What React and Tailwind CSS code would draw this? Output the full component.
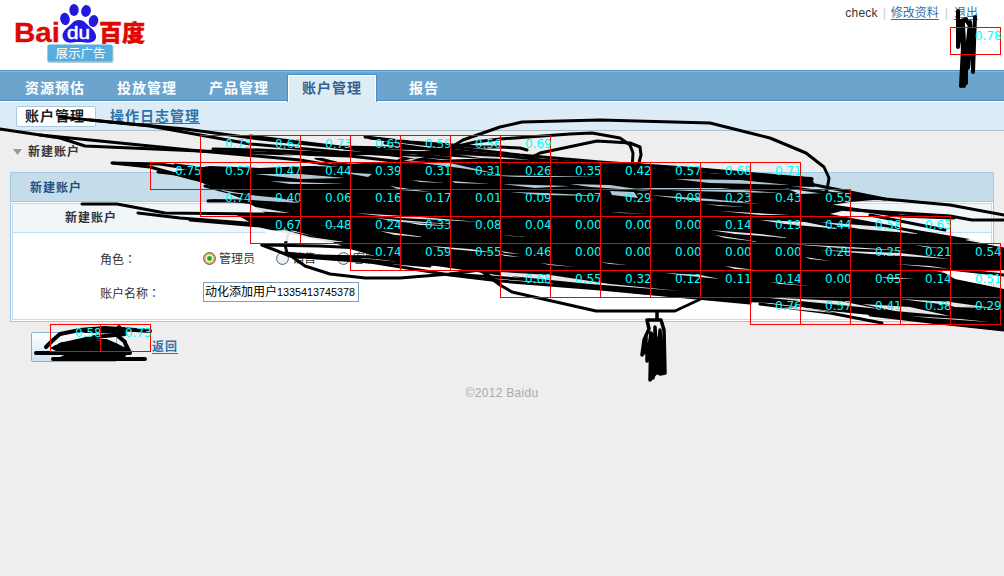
import React from "react";

const rows = [
  { x: 950, y: 27, v: "0.78" },
  { x: 200, y: 135, v: "0.73 0.62 0.73 0.65 0.59 0.56 0.69" },
  { x: 150, y: 162, v: "0.75 0.57 0.47 0.44 0.39 0.31 0.31 0.26 0.35 0.42 0.57 0.68 0.71" },
  { x: 200, y: 189, v: "0.74 0.40 0.06 0.16 0.17 0.01 0.09 0.07 0.29 0.08 0.23 0.43 0.55" },
  { x: 250, y: 216, v: "0.67 0.48 0.24 0.33 0.08 0.04 0.00 0.00 0.00 0.14 0.19 0.44 0.58 0.63" },
  { x: 350, y: 243, v: "0.74 0.59 0.55 0.46 0.00 0.00 0.00 0.00 0.00 0.28 0.25 0.21 0.54" },
  { x: 500, y: 270, v: "0.68 0.55 0.32 0.12 0.11 0.14 0.00 0.05 0.14 0.51" },
  { x: 750, y: 297, v: "0.76 0.57 0.41 0.38 0.29" },
  { x: 50, y: 324, v: "0.58 0.73" },
];
const cells = rows.flatMap((r) => r.v.split(" ").map((v, i) => ({ x: r.x + i * 50, y: r.y, v })));

const strokes = [
  "M60 117L110 122L185 129L260 139L345 148L420 153L520 160",
  "M90 120L150 126L250 144L340 152L450 158",
  "M0 129L60 138L85 146L200 151L350 156L420 164",
  "M40 135L100 141L200 151L300 160L370 172",
  "M213 149L260 150L340 154L460 152L520 158",
  "M250 136L340 147L440 149L540 160L640 168",
  "M112 163L150 167L190 178L250 192L330 210",
  "M113 163L160 164L230 175L300 185",
  "M175 165L230 172L300 178L360 184",
  "M158 172L230 180L300 190L360 200",
  "M205 186L240 195L290 200L340 210",
  "M208 201L260 201L320 208L380 215",
  "M82 204L117 204L165 213L260 214L340 218",
  "M138 213L180 218L260 224L330 230L430 240",
  "M190 220L260 226L320 239L420 250",
  "M365 137L410 142L480 147L500 147L520 148L527 150",
  "M370 138L440 146L520 155L600 162L700 169L812 179",
  "M385 143L450 152L550 161L640 166L740 174L812 179",
  "M345 148L400 156L460 164L520 168",
  "M316 158L340 164L390 170L450 172",
  "M400 167L450 148L463 140L500 127L522 122L600 120L710 123L750 133L770 138L806 153L824 167L829 178L827 190L815 206",
  "M365 180L400 160L450 148L475 142L500 139L570 134L592 133L620 138L630 145L633 153L632 170",
  "M520 163L540 153L597 141L630 143L640 147L641 155L637 170",
  "M290 228L285 245L287 253L305 266L330 274L365 278L400 278L450 274L480 270L500 285L512 292L596 311L675 311L705 297",
  "M262 245L290 256L370 262L450 275L500 281L600 289L750 303",
  "M262 245L320 246L400 250L500 260",
  "M317 256L370 257L440 265L500 274",
  "M285 253L350 259L430 266",
  "M450 242L468 260L500 284",
  "M450 274L560 282L640 291L720 299",
  "M810 184L850 192L885 199L950 205L1004 215",
  "M780 186L850 196L885 199",
  "M820 208L950 216L972 220L1004 220",
  "M870 215L945 230",
  "M850 220L920 235L1004 249",
  "M825 205L900 216L954 218",
  "M900 236L970 244L1004 255",
  "M890 252L950 262L1004 267",
  "M895 262L950 269L1004 275",
  "M760 304L830 313L882 323",
  "M870 315L930 322L1004 330",
];

const streaks = [
  ["#c5ddea", "M255 174L300 174L345 178L300 179Z M270 181L345 184L290 184Z M340 172L372 174L368 177Z M390 186L430 192L400 190Z M405 161L450 163L498 174L460 168Z M412 180L445 183L420 182Z M452 181L490 184L455 183Z M480 175L550 176L600 177L520 177Z M503 184L570 186L535 188Z M510 192L545 193L605 196L540 195Z M570 184L610 185L650 191L590 187Z M675 179L740 180L790 185L710 183Z M630 188L720 188L780 193L690 191Z M610 191L634 192L638 198L612 195Z M650 195L710 199L760 204L690 200Z M250 195L280 198L300 203L250 200Z M217 189L250 195L230 193Z"],
  ["#eeeeee", "M250 160L300 163L340 167L260 164Z M280 154L340 158L310 158Z M460 155L500 157L530 160L480 158Z M400 156L425 157L415 159Z"],
  ["#f1f6fb", "M250 206L290 213L250 211Z M355 213L420 217L480 222L400 218Z M375 218L450 224L400 222Z M610 212L650 214L620 213Z M705 204L745 207L720 206Z M720 211L790 215L760 215Z"],
  ["#ffffff", "M265 231L285 230L310 237L345 242L265 241Z M320 225L350 228L335 227Z M380 231L425 237L395 235Z M405 222L450 226L420 225Z M500 235L528 237L510 236Z M710 230L760 234L790 238L735 234Z M715 235L760 242L725 238Z M760 220L805 222L840 229L785 224Z M820 222L885 227L920 234L860 229Z M500 251L520 254L505 253Z M500 254L520 257L505 256Z M430 246L470 249L495 253L450 249Z M540 263L575 267L550 265Z M600 262L627 265L610 264Z M725 266L755 270L735 269Z M500 272L550 275L610 284L680 291L590 284L500 275Z M665 273L700 275L720 279L680 275Z M770 282L810 286L780 284Z M820 250L900 253L950 259L870 254Z M790 244L850 247L910 251L840 248Z M805 257L830 261L810 259Z M915 245L940 248L925 247Z M895 264L950 269L930 266Z M935 271L1000 276L1000 284L970 281L960 276Z M880 277L915 279L890 279Z M760 297L840 301L880 309L830 304Z M800 307L835 313L780 308Z M862 304L910 307L950 316L895 311Z M900 299L950 302L1000 309L940 304Z M945 304L982 308L955 307Z M910 316L960 319L990 322L930 318Z M975 238L991 240L991 245L965 240Z"],
];

function Ink() {
  return (
    <svg className="absolute inset-0 w-[1004px] h-[576px] pointer-events-none" viewBox="0 0 1004 576">
      <path
        d="M175 171L210 166L260 168L330 165L400 161L500 158L560 161L640 167L720 174L812 177L815 187L780 186L800 194L850 192L885 199L850 202L825 206L842 211L830 214L905 228L970 239L1004 249V270H940L955 279L1004 289V331L930 323L880 316L830 311L770 303L720 301L640 294L560 285L500 274L440 266L400 263L350 249L330 241L295 231L255 225L235 214L265 213L250 204L205 199L245 200L215 188L180 174Z"
        fill="#000"
      />
      <g fill="none" stroke="#000" strokeWidth="3" strokeLinecap="round" strokeLinejoin="round">
        {strokes.map((d) => <path key={d} d={d} />)}
        <path strokeWidth="4" d="M958 11V47M958 22L966 19L960 25M962 24L964 86M960 30L963 47L961 86L966 83L966 60L970 22L972 48L973 72L975 17M963 24L966 82M966 20L970 26L968 68M958 35L964 45" />
        <path strokeWidth="3.5" d="M657 312V320M647 320H661L664 330L665 373L660 374M647 320L649 329L644 340L642 355L647 348L647 361L651 333L650 380L655 374L655 327L658 373L660 330L663 372M653 335V378M660 335L657 345V373M646 335V350M661 345V372" />
        <path strokeWidth="4" d="M46 347L52 341L60 334L80 330L105 328L150 331M36 353H130L125 343M53 359H145M60 345L95 337L125 334L119 327L115 332M85 331L124 329L118 336L125 342M56 347L100 338L126 350L80 347L120 359" />
      </g>
      <path d="M50 348L62 342L85 341L108 340L118 344L128 353L122 361L55 360L64 355ZM82 328L125 327L123 334L90 333Z" fill="#000" />
      <g opacity=".9">
        {streaks.map(([c, d]) => <path key={c} d={d} fill={c} />)}
      </g>
      <g fontFamily="DejaVu Sans, sans-serif" fontSize="12" fill="#00ffff">
        {cells.map((c) => (
          <g key={c.x + "-" + c.y}>
            <rect x={c.x + 0.5} y={c.y + 0.5} width="50" height="27" fill="none" stroke="#f00" />
            <text x={c.x + 25} y={c.y + 13}>{c.v}</text>
          </g>
        ))}
      </g>
    </svg>
  );
}

function Radio({ label, checked }) {
  return (
    <label className="flex items-center gap-[3px]">
      <svg width="13" height="13" viewBox="0 0 13 13">
        <circle cx="6.5" cy="6.5" r="5.9" fill={checked ? "#f3b94b" : "#f1f1ec"} stroke="#35618e" />
        {checked && <circle cx="6.5" cy="6.5" r="3.7" fill="#eef3e6" />}
        {checked && <circle cx="6.5" cy="6.5" r="2.4" fill="#27a52c" />}
      </svg>
      <span className="relative top-px">{label}</span>
    </label>
  );
}

function Logo() {
  return (
    <svg width="150" height="66" viewBox="0 0 150 66">
      <g fontWeight="bold" fill="#e10602">
        <text x="14" y="42" fontFamily="Liberation Sans, sans-serif" fontSize="28" textLength="46" lengthAdjust="spacingAndGlyphs" stroke="#e10602" strokeWidth=".3">Bai</text>
        <text x="99" y="40.500" fontFamily="Noto Sans CJK SC, sans-serif" fontSize="23" fontWeight="900" textLength="46" stroke="#e10602" strokeWidth=".4">百度</text>
      </g>
      <g fill="#2319dc">
        <ellipse cx="65" cy="19" rx="4.8" ry="6.2" transform="rotate(-12 65 19)" />
        <ellipse cx="74" cy="10" rx="4.7" ry="6" />
        <ellipse cx="86" cy="11" rx="4.8" ry="6" transform="rotate(12 86 11)" />
        <ellipse cx="93.500" cy="21" rx="4.7" ry="6" transform="rotate(15 93.500 21)" />
        <path d="M79 20C85 20 87 25 91 28C96 32 98 38 94 41C90 44 84 42 79 42C73 42 69 44 65 41C61 37 62 32 67 28C71 25 73 20 79 20Z" />
      </g>
      <text x="67" y="39" fontFamily="Liberation Sans, sans-serif" fontSize="18" fill="#fff" stroke="#fff" strokeWidth=".5" textLength="23" lengthAdjust="spacingAndGlyphs">du</text>
      <rect x="47.500" y="45" width="66" height="18" rx="2" fill="#b9cdd9" />
      <rect x="47.500" y="44.500" width="65" height="17" rx="2" fill="#58addf" />
      <text x="55.500" y="57.500" fontFamily="Noto Sans CJK SC, sans-serif" fontSize="12.500" fill="#fff">展示广告</text>
    </svg>
  );
}

export default function App() {
  return (
    <div className="relative w-[1004px] h-[576px] overflow-hidden bg-[#eeeeee] text-[12px] leading-4 text-[#333] font-['Liberation_Sans','Noto_Sans_CJK_SC',sans-serif]">
      <header className="h-[70px] bg-white flex justify-between">
        <Logo />
        <div className="flex items-start pt-[5px] pr-[26px]">
          <span className="tracking-[0.2px]">check</span>
          <span className="text-[#ccc] mx-[5px]">|</span>
          <a className="text-[#3072a8] underline underline-offset-2">修改资料</a>
          <span className="text-[#ccc] mx-[6px]">|</span>
          <a className="text-[#3072a8] underline underline-offset-2">退出</a>
        </div>
      </header>
      <nav className="h-8 bg-[#6ba5ce] border-t border-t-[#5797c8] border-b border-b-white flex items-end text-[14px] leading-[18px] tracking-[1px] font-bold text-white">
        <div className="w-full h-[30px] border-t border-t-[#85b7dc] border-b border-b-[#4d8fc6] flex items-center pl-[25px]">
          <span className="w-[92px] pt-[3px]">资源预估</span>
          <span className="w-[92px] pt-[3px]">投放管理</span>
          <span className="w-[78px] pt-[3px]">产品管理</span>
          <span className="w-[90px] h-[28px] mt-[3px] bg-[#dcedf6] border border-b-0 border-[#4d8fc6] text-[#365f91] flex items-center justify-center shadow-[inset_0_1px_white,inset_1px_0_white,inset_-1px_0_white]">账户管理</span>
          <span className="ml-[32px] pt-[3px]">报告</span>
        </div>
      </nav>
      <div className="h-[29px] bg-[#dcecf6] border-b border-[#aabfcc] flex items-center pl-4 text-[14px] leading-[18px] tracking-[1px] font-bold">
        <span className="w-20 h-[21px] bg-white border border-[#abcade] rounded-[2px] flex items-center pl-2 text-[#222]">账户管理</span>
        <a className="ml-[14px] text-[#3072a8] underline underline-offset-2">操作日志管理</a>
      </div>
      <div className="h-[41px] flex items-center pl-[13px] gap-[6px] font-bold tracking-[1px]">
        <svg width="9" height="6" viewBox="0 0 9 6"><path d="M0 0H9L4.500 6Z" fill="#999" /></svg>
        <span>新建账户</span>
      </div>
      <section className="ml-[10px] w-[984px] h-[150px] bg-white border border-[#a0cae4]">
        <h2 className="h-[29px] bg-[#c5ddea] border-b border-[#a0cae4] pl-[19px] pt-[2px] flex items-center font-bold tracking-[1px] text-[#1f4e82]">新建账户</h2>
        <div className="mx-px mt-px h-[117px] border border-[#c3deee]">
          <h3 className="h-[29px] bg-[#f1f6fb] border-b border-[#c3deee] pl-[52px] flex items-center font-bold tracking-[1px]">新建账户</h3>
          <div className="mt-[16px] pl-[87px] flex items-center h-[18px]">
            <span className="w-[103px] pt-[2px] font-['Noto_Sans_CJK_SC',sans-serif]">角色<span className="font-['Noto_Sans_CJK_TC',sans-serif]" lang="zh-TW">：</span></span>
            <div className="flex gap-[21px]">
              <Radio label="管理员" checked />
              <Radio label="销售" />
              <Radio label="客服" />
              <Radio label="财务" />
              <Radio label="审核" />
            </div>
          </div>
          <div className="mt-[15px] pl-[87px] flex items-center h-5">
            <span className="w-[103px] pt-px font-['Noto_Sans_CJK_SC',sans-serif]">账户名称<span className="font-['Noto_Sans_CJK_TC',sans-serif]" lang="zh-TW">：</span></span>
            <span className="w-[156px] h-5 border border-[#7f9db9] bg-white text-black px-px flex items-center whitespace-nowrap">
              动化添加用户<span className="text-[10.8px]">1335413745378</span>
            </span>
          </div>
        </div>
      </section>
      <div className="mt-[10px] ml-[31px] flex items-center">
        <span className="w-[86px] h-[30px] border border-[#82afd3] rounded-[2px] bg-linear-to-b from-white to-[#cfe2f2]" />
        <a className="ml-[35px] font-bold tracking-[1px] text-[#3072a8] underline underline-offset-2">返回</a>
      </div>
      <footer className="mt-[23px] text-center text-[#aaa] tracking-[0.3px]">©2012 Baidu</footer>
      <Ink />
    </div>
  );
}
